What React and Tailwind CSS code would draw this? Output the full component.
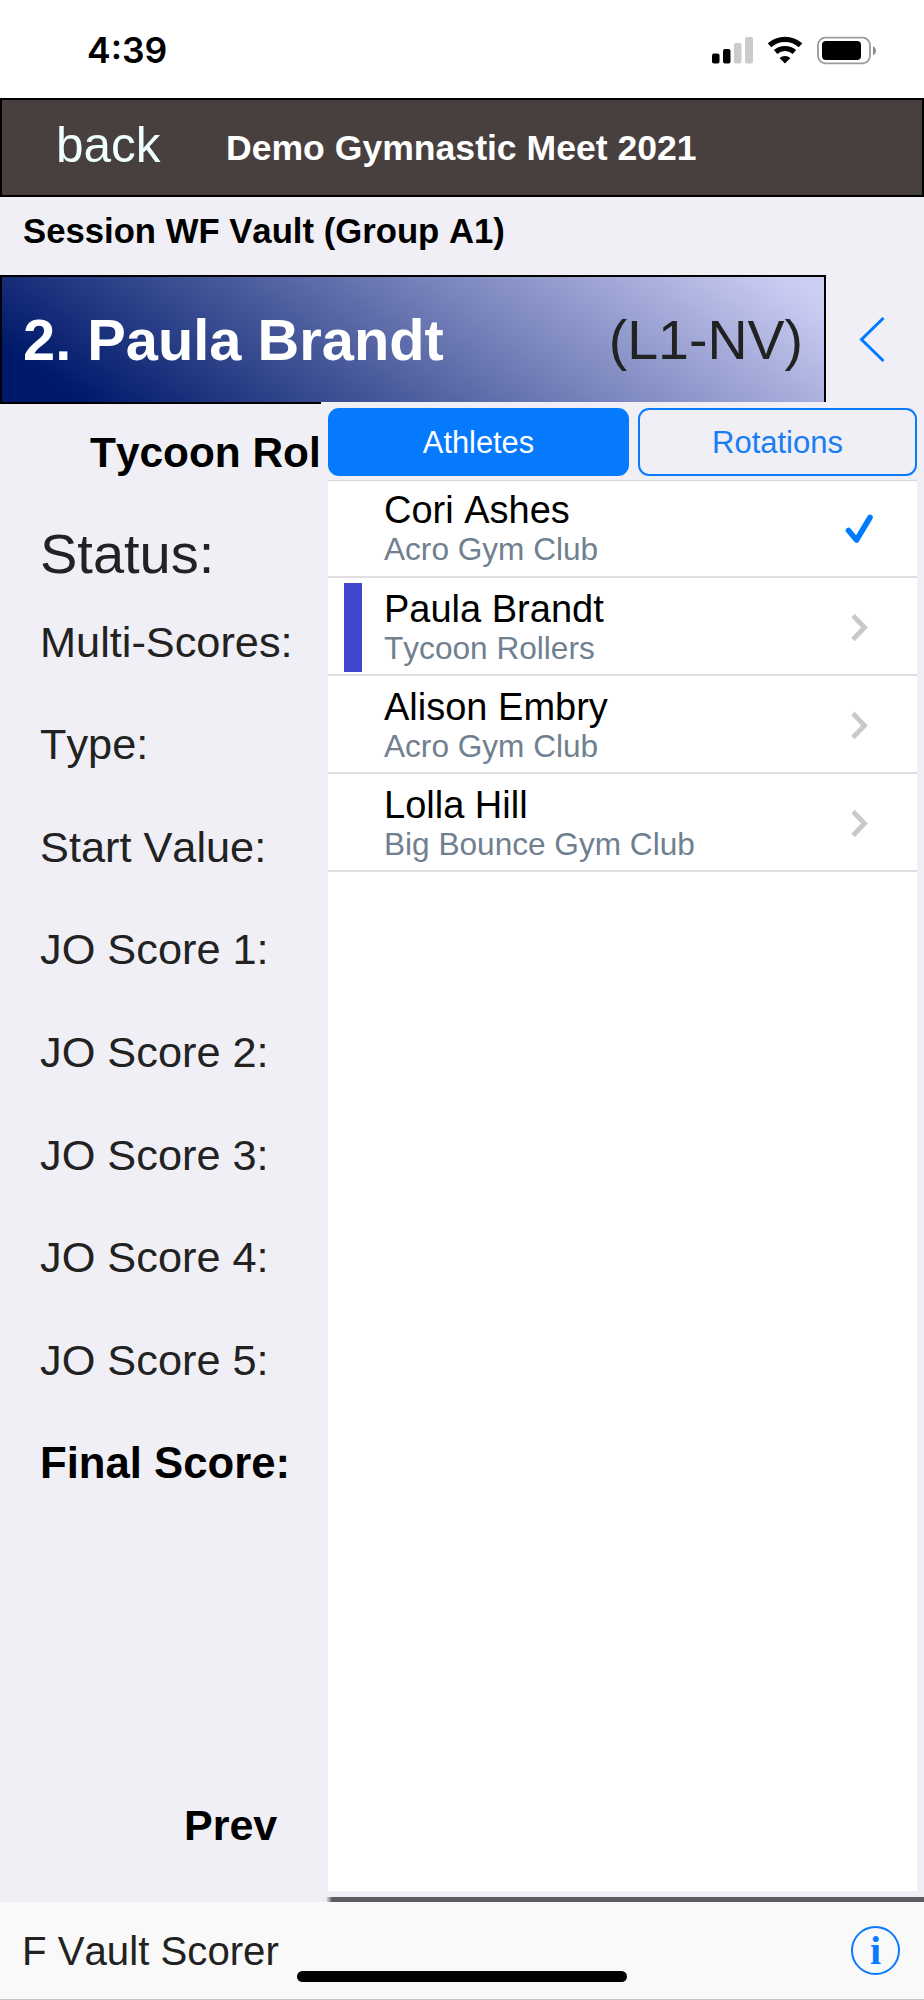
import React, { useState } from 'react';

const athletes = [
  { name: 'Cori Ashes', club: 'Acro Gym Club', done: true },
  { name: 'Paula Brandt', club: 'Tycoon Rollers', current: true },
  { name: 'Alison Embry', club: 'Acro Gym Club' },
  { name: 'Lolla Hill', club: 'Big Bounce Gym Club' },
];

const fields = ['Multi-Scores:', 'Type:', 'Start Value:', 'JO Score 1:', 'JO Score 2:', 'JO Score 3:', 'JO Score 4:', 'JO Score 5:'];

function StatusBar() {
  return (
    <div className="flex h-[98px] items-start justify-between bg-white pl-[87px] pr-[47px] pt-[30px]">
      <span className="font-['Inter',sans-serif] text-[35.5px] font-semibold leading-[42px] text-black">4:39</span>
      <svg className="mt-[3px]" width="166" height="36" viewBox="0 0 166 36">
        {/* Signal */}
        <rect x="1" y="20.5" width="7.5" height="10" rx="2" />
        <rect x="12" y="16" width="7.5" height="14.5" rx="2" />
        <rect x="23" y="10" width="7.5" height="20.5" rx="2" fill="#cbcbcb" />
        <rect x="34" y="4" width="8" height="26.5" rx="2" fill="#cbcbcb" />
        {/* Wifi */}
        <path d="M58.5 12.2a23.5 23.5 0 0 1 31 0" fill="none" stroke="#000" strokeWidth="5.4" />
        <path d="M64.6 19a14.4 14.4 0 0 1 18.8 0" fill="none" stroke="#000" strokeWidth="5.2" />
        <path d="M74 30.5l-5.4-5.6a8.4 8.4 0 0 1 10.8 0z" />
        {/* Battery */}
        <rect x="107" y="4.7" width="52" height="25.6" rx="7.5" fill="none" stroke="#9b9b9b" strokeWidth="1.8" />
        <rect x="111" y="8" width="39" height="19" rx="4" />
        <path d="M162 13.2c4 1.8 4 7.2 0 9z" fill="#8d8d8d" />
      </svg>
    </div>
  );
}

function AthleteRow({ athlete }) {
  return (
    <div className="flex h-[98.3px] border-b-2 border-[#dfdfe1] pt-[11px] first:h-[96.5px] first:pt-[9px]">
      <div className="w-[56px] shrink-0 pl-[16px]">
        {athlete.current && <div className="-mt-[5.5px] h-[89px] w-[18px] bg-[#4147cc]"></div>}
      </div>
      <div className="flex-1">
        <p className="text-[38px] leading-[40px] text-black">{athlete.name}</p>
        <p className="text-[31.6px] leading-[39px] text-[#708090]">{athlete.club}</p>
      </div>
      <svg className="mr-[43px] mt-[21px]" width="30" height="36" viewBox="0 0 30 36" fill="none">
        {athlete.done ? (
          <path d="M4.5 19.5l8 9.5L26 6.5" stroke="#007aff" strokeWidth="5.6" strokeLinecap="round" strokeLinejoin="round" />
        ) : (
          <path d="M9 5.5l11.5 12L9 29.5" stroke="#c9c9cb" strokeWidth="4.8" />
        )}
      </svg>
    </div>
  );
}

function AthletePanel() {
  const [tab, setTab] = useState('athletes');
  const active = 'border-[#057aff] bg-[#057aff] text-white';
  const idle = 'border-[#0a7aff] bg-transparent text-[#1a7df2]';

  return (
    <div className="flex flex-1 flex-col pt-[6px]">
      <div className="mx-[7px] flex h-[72px] gap-[9px]">
        <button
          onClick={() => setTab('athletes')}
          className={`h-[68px] w-[301px] rounded-[11px] border-2 pt-[3px] text-[30.8px] ${tab === 'athletes' ? active : idle}`}
        >
          Athletes
        </button>
        <button
          onClick={() => setTab('rotations')}
          className={`h-[68px] w-[279px] rounded-[11px] border-2 pt-[3px] text-[31px] ${tab === 'rotations' ? active : idle}`}
        >
          Rotations
        </button>
      </div>
      <div className="mx-[7px] flex-1 border-t border-[#d8d8dc] bg-white">
        {athletes.map((athlete) => (
          <AthleteRow key={athlete.name} athlete={athlete} />
        ))}
      </div>
      <div className="ml-[5px] mt-[6px] h-[5px] bg-gradient-to-r from-[#5c5c61]/0 via-[#5c5c61] via-1% to-[#5c5c61]"></div>
    </div>
  );
}

function App() {
  return (
    <div className="flex h-[2000px] w-[924px] flex-col overflow-hidden bg-[#f0eff5] font-['Liberation_Sans',Arial,sans-serif] [font-kerning:none]">
      <StatusBar />

      {/* Meet header */}
      <header className="flex h-[99px] items-center border-2 border-black bg-[#483f3f] pl-[54px]">
        <button className="h-[60px] w-[170px] pb-[6px] text-left text-[49.5px] leading-[53px] text-[#f0ffff]">back</button>
        <h1 className="text-[35.6px] font-bold leading-[40px] text-white">Demo Gymnastic Meet 2021</h1>
      </header>

      <div className="flex h-[78px] items-center pb-[9px] pl-[23px] text-[34.7px] font-bold text-black">
        Session WF Vault (Group A1)
      </div>

      {/* Current athlete */}
      <div className="flex h-[127px]">
        <div className="flex w-[826px] items-center justify-between border-2 border-b-0 border-black bg-[linear-gradient(35.5deg,#001a6b_8.5%,#cbcdf3_96%)] pl-[21px] pr-[21px] pt-[2px]">
          <h2 className="text-[57.8px] font-bold text-white">2. Paula Brandt</h2>
          <span className="text-[55.5px] text-[#222]">(L1-NV)</span>
        </div>
        <div className="flex flex-1 pl-[31px] pt-[39.5px]">
          <svg width="30" height="50" viewBox="0 0 30 50" fill="none">
            <path d="M26.5 3L4.5 24.5l22 21.5" stroke="#007aff" strokeWidth="3" />
          </svg>
        </div>
      </div>

      <div className="flex h-[1500px]">
        <div className="w-[321px] whitespace-nowrap border-t-2 border-black">
          <h3 className="h-[96px] pl-[90px] text-[42.4px] font-bold leading-[97px] text-black">Tycoon Rol</h3>
          <div className="mt-[18px] pl-[40px] text-[43.3px] text-[#222]">
            <p className="h-[72.6px] text-[56px] leading-[72px]">Status:</p>
            {fields.map((label) => (
              <p key={label} className="h-[102.6px] leading-[102px]">{label}</p>
            ))}
            <p className="h-[102.6px] text-[43.7px] font-bold leading-[103px] text-black">Final Score:</p>
          </div>
          <button className="ml-[184px] mt-[285px] text-[43px] font-bold leading-[52px] text-black">Prev</button>
        </div>
        <AthletePanel />
      </div>

      {/* Bottom toolbar */}
      <footer className="relative flex flex-1 items-center justify-between border-b border-[#c8c8c8] bg-[#f9f9f9] pl-[22px] pr-[24px]">
        <span className="pt-[3px] text-[40.2px] text-[#222]">F Vault Scorer</span>
        <div className="flex size-[49px] items-center justify-center rounded-full border-2 border-[#0a7aff] font-['Liberation_Serif',serif] text-[40px] font-bold leading-none text-[#0a7aff]">
          i
        </div>
        <div className="absolute bottom-[17px] left-[297px] h-[11px] w-[330px] rounded-full bg-black"></div>
      </footer>
    </div>
  );
}

export default App;
